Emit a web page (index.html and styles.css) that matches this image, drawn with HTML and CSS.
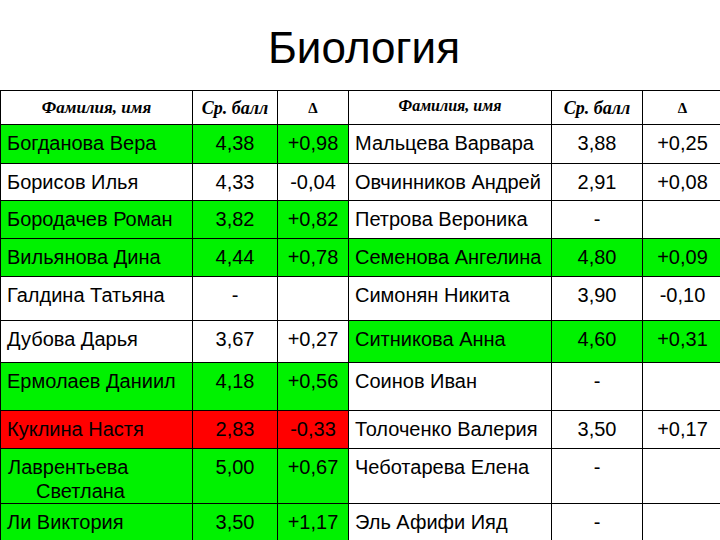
FILE: index.html
```html
<!DOCTYPE html>
<html lang="ru">
<head>
<meta charset="utf-8">
<title>Биология</title>
<link rel="stylesheet" href="styles.css">
</head>
<body>
<div class="page">
  <h1 class="title">Биология</h1>
  <table class="grades">
    <colgroup>
      <col class="c-name"><col class="c-avg"><col class="c-delta">
      <col class="c-name2"><col class="c-avg2"><col class="c-delta2">
    </colgroup>
    <tr class="head">
      <th class="h-name">Фамилия, имя</th><th class="h-avg">Ср. балл</th><th class="h-delta">Δ</th>
      <th class="h-name h-small">Фамилия, имя</th><th class="h-avg">Ср. балл</th><th class="h-delta">Δ</th>
    </tr>
    <tr class="r1">
      <td class="name green">Богданова Вера</td><td class="num green">4,38</td><td class="num green">+0,98</td>
      <td class="name">Мальцева Варвара</td><td class="num">3,88</td><td class="num">+0,25</td>
    </tr>
    <tr class="r2">
      <td class="name">Борисов Илья</td><td class="num">4,33</td><td class="num">-0,04</td>
      <td class="name">Овчинников Андрей</td><td class="num">2,91</td><td class="num">+0,08</td>
    </tr>
    <tr class="r3">
      <td class="name green">Бородачев Роман</td><td class="num green">3,82</td><td class="num green">+0,82</td>
      <td class="name">Петрова Вероника</td><td class="num">-</td><td class="num"></td>
    </tr>
    <tr class="r4">
      <td class="name green">Вильянова Дина</td><td class="num green">4,44</td><td class="num green">+0,78</td>
      <td class="name green">Семенова Ангелина</td><td class="num green">4,80</td><td class="num green">+0,09</td>
    </tr>
    <tr class="r5">
      <td class="name">Галдина Татьяна</td><td class="num">-</td><td class="num"></td>
      <td class="name">Симонян Никита</td><td class="num">3,90</td><td class="num">-0,10</td>
    </tr>
    <tr class="r6">
      <td class="name">Дубова Дарья</td><td class="num">3,67</td><td class="num">+0,27</td>
      <td class="name green">Ситникова Анна</td><td class="num green">4,60</td><td class="num green">+0,31</td>
    </tr>
    <tr class="r7">
      <td class="name green">Ермолаев Даниил</td><td class="num green">4,18</td><td class="num green">+0,56</td>
      <td class="name">Соинов Иван</td><td class="num">-</td><td class="num"></td>
    </tr>
    <tr class="r8">
      <td class="name red">Куклина Настя</td><td class="num red">2,83</td><td class="num red">-0,33</td>
      <td class="name">Толоченко Валерия</td><td class="num">3,50</td><td class="num">+0,17</td>
    </tr>
    <tr class="r9">
      <td class="name green wrap">Лаврентьева Светлана</td><td class="num green">5,00</td><td class="num green">+0,67</td>
      <td class="name">Чеботарева Елена</td><td class="num">-</td><td class="num"></td>
    </tr>
    <tr class="r10">
      <td class="name green">Ли Виктория</td><td class="num green">3,50</td><td class="num green">+1,17</td>
      <td class="name">Эль Афифи Ияд</td><td class="num">-</td><td class="num"></td>
    </tr>
  </table>
</div>
</body>
</html>
```
FILE: styles.css
```css
html, body {
  margin: 0;
  padding: 0;
  background: #ffffff;
  overflow: hidden;
}

.page {
  width: 720px;
  height: 540px;
  overflow: hidden;
  font-family: "Liberation Sans", Arial, sans-serif;
  color: #000;
}

.title {
  margin: 0;
  height: 90px;
  box-sizing: border-box;
  padding: 22px 0 0 8px;
  font-weight: normal;
  font-size: 44px;
  line-height: 51px;
  text-align: center;
}

.grades {
  border-collapse: collapse;
  table-layout: fixed;
  width: 722px;
}

.c-name { width: 192px; }
.c-avg { width: 85px; }
.c-delta { width: 71px; }
.c-name2 { width: 203px; }
.c-avg2 { width: 91px; }
.c-delta2 { width: 80px; }

.grades th,
.grades td {
  border: 1px solid #000;
  padding: 0;
  box-sizing: border-box;
}

.grades th {
  height: 34px;
  font-family: "Liberation Serif", "Times New Roman", serif;
  font-style: italic;
  font-weight: bold;
  font-size: 17px;
  line-height: 20px;
  vertical-align: middle;
  text-align: center;
}

.grades th.h-avg {
  font-size: 18px;
}

.grades th.h-small {
  font-size: 16px;
  padding-bottom: 4px;
}

.grades th.h-delta {
  font-style: normal;
  font-size: 15px;
}

.grades td {
  font-size: 20px;
  line-height: 24px;
  vertical-align: top;
  padding-top: 6px;
}

.grades td.name {
  padding-left: 6px;
  text-align: left;
}

.grades td.num {
  text-align: center;
}

.grades td.wrap {
  padding-left: 35px;
  text-indent: -28px;
}

.green { background: #00f200; }
.red { background: #ff0000; }

.r1 td { height: 39px; }
.r2 td { height: 37px; }
.r3 td { height: 38px; }
.r4 td { height: 38px; }
.r5 td { height: 44px; }
.r6 td { height: 42px; }
.r7 td { height: 48px; }
.r8 td { height: 38px; }
.r9 td { height: 55px; }
.r10 td { height: 40px; }
```
